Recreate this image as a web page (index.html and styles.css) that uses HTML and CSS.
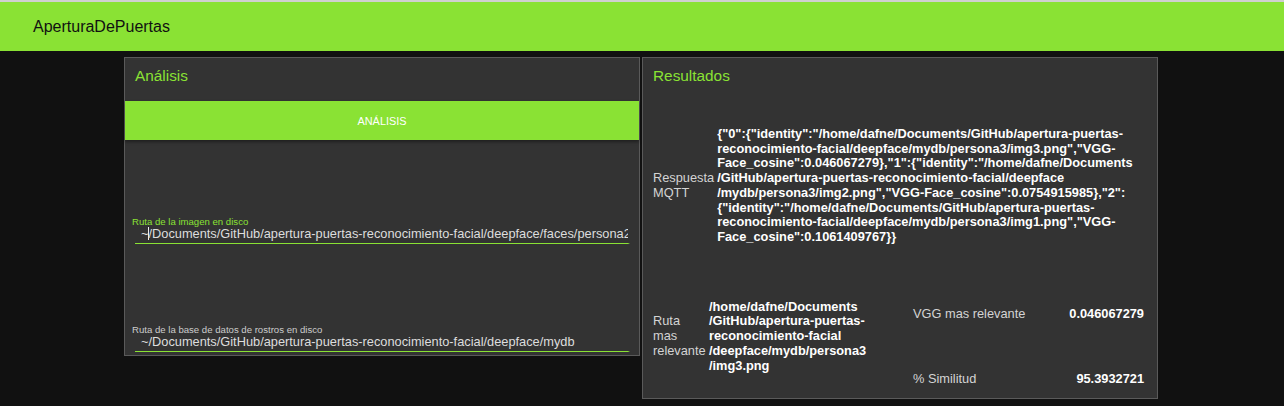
FILE: index.html
```html
<!DOCTYPE html>
<html lang="es">
<head>
<meta charset="utf-8">
<title>AperturaDePuertas</title>
<link rel="stylesheet" href="styles.css">
</head>
<body>
<header class="topbar"><span class="brand">AperturaDePuertas</span></header>
<main class="board">
  <section class="card card-left">
    <h2 class="card-title">Análisis</h2>
    <button class="btn" type="button">ANÁLISIS</button>
    <div class="field field-first">
      <span class="field-label is-active">Ruta de la imagen en disco</span>
      <div class="field-input">~<span class="caret"></span>/Documents/GitHub/apertura-puertas-reconocimiento-facial/deepface/faces/persona2/img1.jpg</div>
    </div>
    <div class="field field-second">
      <span class="field-label">Ruta de la base de datos de rostros en disco</span>
      <div class="field-input">~/Documents/GitHub/apertura-puertas-reconocimiento-facial/deepface/mydb</div>
    </div>
  </section>
  <section class="card card-right">
    <h2 class="card-title">Resultados</h2>
    <div class="results">
      <div class="res-label">Respuesta<br>MQTT</div>
      <div class="res-json">{"0":{"identity":"/home/dafne/Documents/GitHub/apertura-puertas-<br>reconocimiento-facial/deepface/mydb/persona3/img3.png","VGG-<br>Face_cosine":0.046067279},"1":{"identity":"/home/dafne/Documents<br>/GitHub/apertura-puertas-reconocimiento-facial/deepface<br>/mydb/persona3/img2.png","VGG-Face_cosine":0.0754915985},"2":<br>{"identity":"/home/dafne/Documents/GitHub/apertura-puertas-<br>reconocimiento-facial/deepface/mydb/persona3/img1.png","VGG-<br>Face_cosine":0.1061409767}}</div>
    </div>
    <div class="metrics">
      <div class="metric-path">
        <div class="res-label path-label">Ruta<br>mas<br>relevante</div>
        <div class="res-value">/home/dafne/Documents<br>/GitHub/apertura-puertas-<br>reconocimiento-facial<br>/deepface/mydb/persona3<br>/img3.png</div>
      </div>
      <div class="metric-scores">
        <div class="score"><span class="res-label">VGG mas relevante</span><span class="res-value">0.046067279</span></div>
        <div class="score"><span class="res-label">% Similitud</span><span class="res-value">95.3932721</span></div>
      </div>
    </div>
  </section>
</main>
</body>
</html>
```
FILE: styles.css
```css
* { box-sizing: border-box; }

body {
  margin: 0;
  background: #111111;
  font-family: "Liberation Sans", Arial, sans-serif;
  text-align: left;
}

.topbar {
  height: 51px;
  border-top: 2px solid #d0d0d0;
  background: #8ae234;
  padding-left: 33px;
  font-size: 16px;
  line-height: 49px;
  color: #111;
}

.board {
  display: grid;
  grid-template-columns: 516px 516px;
  column-gap: 2px;
  align-items: start;
  margin: 6px 0 0 124px;
}

.card {
  background: #333333;
  border: 1px solid #5a5a5a;
}

.card-title {
  margin: 0;
  padding: 9px 10px 0;
  font-size: 15.36px;
  line-height: 18px;
  font-weight: normal;
  color: #8ae234;
}

.btn {
  display: block;
  width: 100%;
  height: 39px;
  margin: 16px 0 0;
  padding: 0;
  border: 0;
  background: #8ae234;
  color: #ffffff;
  font-family: "Liberation Sans", Arial, sans-serif;
  font-size: 10.9px;
  box-shadow: 0 2px 3px rgba(0, 0, 0, 0.4);
}

.field {
  padding: 0 9px 0 7px;
}

.field-first { margin-top: 76px; }

.field-second {
  margin-top: 80.5px;
  padding-bottom: 3px;
}

.field-label {
  display: block;
  font-size: 9.6px;
  line-height: 11px;
  color: #cccccc;
}

.field-label.is-active { color: #8ae234; }

.field-input {
  margin-left: 3px;
  padding: 0 0 1px 6px;
  border-bottom: 1px solid #8ae234;
  border-right: 2px solid transparent;
  font-size: 12.8px;
  line-height: 14.72px;
  color: #dddddd;
  white-space: nowrap;
  overflow: hidden;
}

.caret {
  display: inline-block;
  width: 1px;
  height: 13px;
  margin-right: -1px;
  vertical-align: -2px;
  background: #f0f0f0;
}

.results {
  display: grid;
  grid-template-columns: auto 1fr;
  column-gap: 3px;
  align-items: center;
  padding: 42px 10px 40px;
}

.res-label {
  font-size: 12.8px;
  line-height: 14.72px;
  color: #d4d4d4;
  white-space: nowrap;
  text-align: left;
}

.res-json,
.res-value {
  font-size: 12.8px;
  line-height: 14.72px;
  font-weight: bold;
  color: #ffffff;
  white-space: nowrap;
  text-align: left;
}

.metrics {
  display: grid;
  grid-template-columns: 260px 1fr;
  align-items: start;
  padding: 0 13px 11.3px 10px;
}

.metric-path {
  display: flex;
  align-items: center;
  margin-top: 15px;
}

.path-label {
  flex: 0 0 56px;
}

.metric-scores {
  display: flex;
  flex-direction: column;
  gap: 50.28px;
  margin-top: 22.5px;
}

.score {
  display: flex;
  justify-content: space-between;
}
```
